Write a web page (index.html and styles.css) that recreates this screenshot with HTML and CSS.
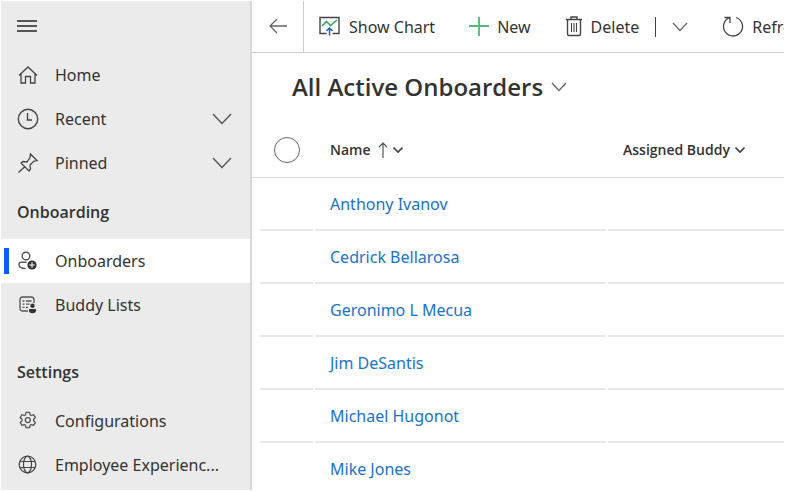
FILE: index.html
```html
<!DOCTYPE html>
<html lang="en">
<head>
<meta charset="utf-8">
<title>All Active Onboarders</title>
<link rel="stylesheet" href="styles.css">
</head>
<body>
<div class="app">
  <nav class="sidebar">
    <button class="menu" aria-label="Menu">
      <svg width="20" height="14" viewBox="0 0 20 14" fill="none" stroke="#555" stroke-width="2"><path d="M0 1h20M0 6h20M0 11h20"/></svg>
    </button>
    <a class="item" href="#">
      <span class="icon"><svg width="22" height="22" viewBox="0 0 22 22" fill="none" stroke="#444" stroke-width="1.300"><path d="M2 11.500 11 3l9 8.500M4 10v9h4.500v-6.500h5V19H18v-9"/></svg></span>
      <span class="label">Home</span>
    </a>
    <button class="item">
      <span class="icon"><svg width="22" height="22" viewBox="0 0 22 22" fill="none" stroke="#444" stroke-width="1.400"><circle cx="11" cy="11" r="9.700"/><path d="M10.500 5v7h4.500"/></svg></span>
      <span class="label">Recent</span>
      <svg width="20" height="12" viewBox="0 0 20 12" fill="none" stroke="#555" stroke-width="1.400"><path d="m1 1 9 9.500L19 1"/></svg>
    </button>
    <button class="item">
      <span class="icon"><svg width="22" height="22" viewBox="0 0 22 22" fill="none" stroke="#444" stroke-width="1.300"><path d="m13.500 2 6.500 6.500-3 .5-4 4 .5 4-1.500 2L4 11l2-1.500 4 .5 3-4.500zM8 14.500 1.500 20.500"/></svg></span>
      <span class="label">Pinned</span>
      <svg width="20" height="12" viewBox="0 0 20 12" fill="none" stroke="#555" stroke-width="1.400"><path d="m1 1 9 9.500L19 1"/></svg>
    </button>
    <h2 class="group">Onboarding</h2>
    <a class="item selected" href="#">
      <span class="icon"><svg width="22" height="22" viewBox="0 0 22 22" fill="none" stroke="#555" stroke-width="1.400"><circle cx="9" cy="6" r="3.800"/><path d="M9.500 12.200H4.500Q2 12.200 2 14.500 2 18.500 8.500 18.500"/><circle cx="15" cy="15" r="4.600" fill="#333" stroke="none"/><path d="M15 12.300v5.400M12.300 15h5.400" stroke="#fff" stroke-width="1.100"/></svg></span>
      <span class="label">Onboarders</span>
    </a>
    <a class="item" href="#">
      <span class="icon"><svg width="22" height="22" viewBox="0 0 22 22" fill="none" stroke="#555" stroke-width="1.300"><path d="M11 17H6q-3 0-3-3V6q0-3 3-3h8q3 0 3 3v3"/><path d="M5.500 7h2M9 7h5.500M5.500 10.200h2M9 10.200h3.500M5.500 13.300h2M9 13.300h2"/><circle cx="15.500" cy="11.800" r="2.200" fill="#333" stroke="none"/><path d="M12 15h7v1.500q0 2.800-3.500 2.800T12 16.500z" fill="#333" stroke="none"/></svg></span>
      <span class="label">Buddy Lists</span>
    </a>
    <h2 class="group spaced">Settings</h2>
    <a class="item" href="#">
      <span class="icon"><svg width="22" height="22" viewBox="0 0 22 22" fill="none" stroke="#555" stroke-width="1.300" stroke-linejoin="round"><path d="M9 2.400h3.600l.5 2.400 1.200.7 2.300-.8 1.800 3-1.800 1.600v1.500l1.800 1.600-1.800 3-2.300-.8-1.200.7-.5 2.400H9l-.5-2.400-1.200-.7-2.300.8-1.800-3L5 10.800V9.300L3.200 7.700l1.800-3 2.300.8 1.200-.7z"/><circle cx="10.800" cy="10.100" r="2.500"/></svg></span>
      <span class="label">Configurations</span>
    </a>
    <a class="item" href="#">
      <span class="icon"><svg width="22" height="22" viewBox="0 0 22 22" fill="none" stroke="#444" stroke-width="1.200"><circle cx="10.500" cy="10.500" r="8.300"/><ellipse cx="10.500" cy="10.500" rx="4" ry="8.300"/><path d="M3.300 7.500h14.400M3.300 13.500h14.400"/></svg></span>
      <span class="label">Employee Experienc...</span>
    </a>
  </nav>

  <main class="main">
    <div class="toolbar">
      <button class="back" aria-label="Back">
        <svg width="18" height="16" viewBox="0 0 18 16" fill="none" stroke="#666" stroke-width="1.300"><path d="M18 7H1M8 0 1 7l7 7"/></svg>
      </button>
      <button class="command chart">
        <svg width="22" height="22" viewBox="0 0 22 22" fill="none"><path d="M7.500 17.500H1V1.500h19v16h-6.500" stroke="#444" stroke-width="1.400"/><path d="m3 10 4.500-4.500 4 4L18 4" stroke="#2fa35a" stroke-width="1.500"/><path d="M10.500 19.500v-7M7.500 15l3-3 3 3" stroke="#1b66b8" stroke-width="1.500"/></svg>
        Show Chart
      </button>
      <button class="command new">
        <svg width="20" height="20" viewBox="0 0 20 20" fill="none" stroke="#4fb878" stroke-width="1.800"><path d="M10 0v19M0 9h20"/></svg>
        New
      </button>
      <button class="command delete">
        <svg width="18" height="22" viewBox="0 0 18 22" fill="none" stroke="#444" stroke-width="1.400"><path d="M1 3.500h16M6 3.500V1h6v2.500M2.500 3.500V18q0 1.500 1.500 1.500h10q1.500 0 1.500-1.500V3.500"/><path d="M6.500 7v9M9 7v9M11.500 7v9" stroke-width="1.100"/></svg>
        Delete
      </button>
      <span class="divider"></span>
      <button class="more" aria-label="More delete options">
        <svg width="16" height="10" viewBox="0 0 16 10" fill="none" stroke="#666" stroke-width="1.300"><path d="m1 1 7 7.500L15 1"/></svg>
      </button>
      <button class="command refresh">
        <svg width="22" height="22" viewBox="0 0 22 22" fill="none" stroke="#444" stroke-width="1.300"><path d="M14 1.500A9.500 9.500 0 1 1 7.500 1.700M2.500 1.500h5.500v5.500"/></svg>
        Refresh
      </button>
    </div>

    <button class="view">
      <span class="title" role="heading" aria-level="1">All Active Onboarders</span>
      <svg width="16" height="10" viewBox="0 0 16 10" fill="none" stroke="#666" stroke-width="1.300"><path d="m1 1 7 7.500L15 1"/></svg>
    </button>

    <table class="grid">
      <colgroup><col class="col-check"><col class="col-name"><col></colgroup>
      <thead>
        <tr>
          <th><input class="pick" type="radio" aria-label="Select all rows"></th>
          <th><button class="column">Name
            <svg class="sort" width="10" height="16" viewBox="0 0 10 16" fill="none" stroke="#555" stroke-width="1.200"><path d="M5 16V1M1 5l4-4 4 4"/></svg><svg width="10" height="8" viewBox="0 0 10 8" fill="none" stroke="#444" stroke-width="1.600"><path d="m.5 1.500 4.500 4.500 4.500-4.500"/></svg></button></th>
          <th><button class="column">Assigned Buddy
            <svg width="10" height="8" viewBox="0 0 10 8" fill="none" stroke="#444" stroke-width="1.600"><path d="m.5 1.500 4.500 4.500 4.500-4.500"/></svg></button></th>
        </tr>
      </thead>
      <tbody>
        <tr><td><div class="cell"></div></td><td><div class="cell"><a href="#">Anthony Ivanov</a></div></td><td><div class="cell"></div></td></tr>
        <tr><td><div class="cell"></div></td><td><div class="cell"><a href="#">Cedrick Bellarosa</a></div></td><td><div class="cell"></div></td></tr>
        <tr><td><div class="cell"></div></td><td><div class="cell"><a href="#">Geronimo L Mecua</a></div></td><td><div class="cell"></div></td></tr>
        <tr><td><div class="cell"></div></td><td><div class="cell"><a href="#">Jim DeSantis</a></div></td><td><div class="cell"></div></td></tr>
        <tr><td><div class="cell"></div></td><td><div class="cell"><a href="#">Michael Hugonot</a></div></td><td><div class="cell"></div></td></tr>
        <tr><td><div class="cell"></div></td><td><div class="cell"><a href="#">Mike Jones</a></div></td><td><div class="cell"></div></td></tr>
      </tbody>
    </table>
  </main>
</div>
</body>
</html>
```
FILE: styles.css
```css
* {
  box-sizing: border-box;
}

body {
  margin: 0;
  height: 100vh;
  padding: 1px 24px 1px 1px;
  background: #fff;
  color: #333;
  font-family: "Noto Sans", "Open Sans", sans-serif;
  font-size: 16px;
  line-height: 24px;
}

button {
  border: 0;
  padding: 0;
  background: none;
  color: inherit;
  font: inherit;
  white-space: nowrap;
}

a {
  color: #1a73cc;
  text-decoration: none;
}

svg {
  display: block;
  flex: none;
}

.app {
  display: flex;
  height: 100%;
  overflow: hidden;
}

/* Sidebar */
.sidebar {
  flex: none;
  width: 251px;
  border-right: 2px solid #d8d8d8;
  background: #ebebeb;
}

.menu {
  display: flex;
  align-items: center;
  width: 52px;
  height: 52px;
  padding-left: 16px;
}

.item {
  position: relative;
  display: flex;
  align-items: center;
  width: 100%;
  height: 44px;
  padding: 0 18px 0 16px;
  color: #333;
  text-align: left;
}

.icon {
  flex: none;
  width: 38px;
}

.label {
  flex: 1;
  overflow: hidden;
  white-space: nowrap;
}

.selected {
  background: #fff;
}

.selected::before {
  content: "";
  position: absolute;
  left: 3px;
  top: 9px;
  width: 5px;
  height: 26px;
  background: #0b5cff;
}

.group {
  margin: 0;
  padding: 15px 16px;
  font-family: "Open Sans", sans-serif;
  font-size: 16px;
  font-weight: 600;
}

.spaced {
  padding-top: 33px;
}

/* Command bar */
.main {
  flex: 1;
  min-width: 0;
}

.toolbar {
  display: flex;
  align-items: center;
  height: 52px;
  border-bottom: 1px solid #ccc;
  overflow: hidden;
}

.toolbar > * {
  flex: none;
}

.back {
  display: flex;
  align-items: center;
  justify-content: center;
  width: 52px;
  height: 100%;
  border-right: 1px solid #ccc;
}

.command {
  display: flex;
  align-items: center;
  gap: 8px;
}

.chart {
  margin-left: 15px;
}

.new,
.delete {
  margin-left: 34px;
}

.divider {
  width: 1px;
  height: 20px;
  margin: 0 16px;
  background: #444;
}

.refresh {
  margin-left: 34px;
}

/* View selector */
.view {
  display: flex;
  align-items: center;
  gap: 8px;
  height: 70px;
  padding: 0 0 2px 40px;
}

.title {
  font-family: "Open Sans", sans-serif;
  font-size: 24px;
  font-weight: 600;
  line-height: 32px;
}

/* Records */
.grid {
  width: 100%;
  table-layout: fixed;
  border-collapse: collapse;
}

.col-check {
  width: 61px;
}

.col-name {
  width: 293px;
}

th {
  height: 54px;
  padding: 0 0 0 17px;
  border-bottom: 1px solid #ddd;
  text-align: left;
  font-family: "Open Sans", sans-serif;
  font-size: 14px;
  font-weight: 600;
}

th:first-child {
  padding-left: 22px;
}

.pick {
  display: block;
  width: 26px;
  height: 26px;
  margin: 0;
  border: 1px solid #666;
  border-radius: 50%;
  appearance: none;
}

.column {
  display: flex;
  align-items: center;
  gap: 5px;
}

.sort {
  margin-left: 2px;
}

td {
  padding: 0 0 0 2px;
}

td:first-child {
  padding-left: 8px;
}

.cell {
  height: 53px;
  padding: 14px 15px;
  border-bottom: 2px solid #e8e8e8;
}
```
